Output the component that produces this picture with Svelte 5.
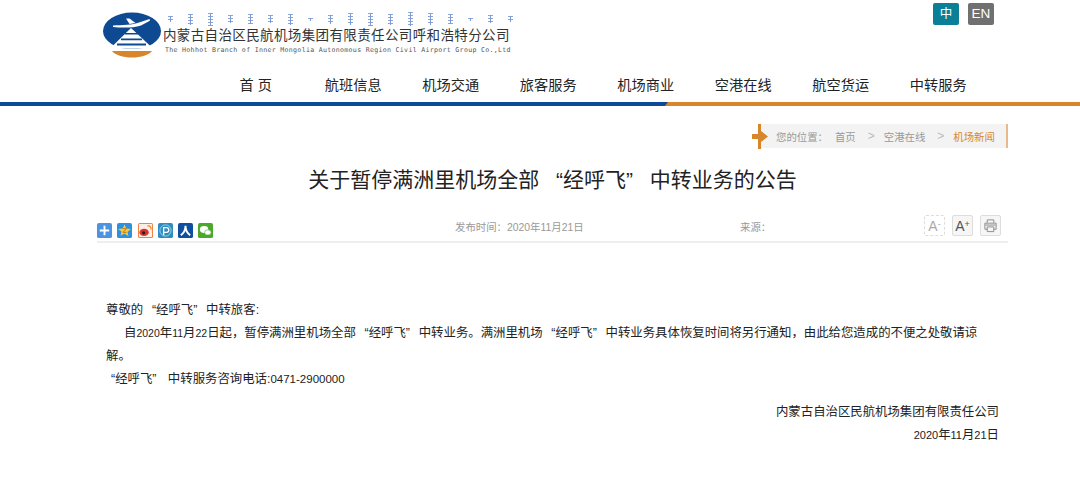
<script>
  const nav = ["首 页", "航班信息", "机场交通", "旅客服务", "机场商业", "空港在线", "航空货运", "中转服务"];
  const mongol = [6, 11, 13, 8, 10, 8, 11, 3, 9, 12, 13, 11, 14, 12, 10, 3, 8, 6];
</script>

<div class="page">
  <header class="top">
    <div class="brand">
      <svg class="logo" width="58" height="46" viewBox="0 0 58 46">
        <defs>
          <clipPath id="oval"><rect x="0" y="0" width="58" height="36.500" /></clipPath>
        </defs>
        <ellipse cx="29" cy="19" rx="29" ry="18.500" fill="#0d4a91" clip-path="url(#oval)" />
        <path d="M28 16 7 36.500h43z" fill="#fff" />
        <path d="M10 13.500c9-.5 20-.5 26-3l9-3c2.500-.5 3 .5 1 1.800l-8 4.200c-8 2.500-19 2.500-28 1.500z" fill="#fff" />
        <path d="M23 6.500h3.500l6 4.500-6 1z" fill="#fff" />
        <path d="M22 21h13v1.600H22zM18 26.500h21v1.800H18zM14 31.500h29v2H14z" fill="#0d4a91" />
        <path d="M9 39h40c-3 4-11 6.500-20 6.500S12 43 9 39z" fill="#d8862b" />
      </svg>
      <div class="brand-text">
        <div class="mongol">
          {#each mongol as h}
            <i style="height: {h}px"></i>
          {/each}
        </div>
        <div class="brand-cn">内蒙古自治区民航机场集团有限责任公司呼和浩特分公司</div>
        <div class="brand-en">The Hohhot Branch of Inner Mongolia Autonomous Region Civil Airport Group Co.,Ltd</div>
      </div>
      <div class="lang">
        <span class="zh">中</span>
        <span class="en">EN</span>
      </div>
    </div>
    <nav class="nav">
      {#each nav as item}
        <span>{item}</span>
      {/each}
    </nav>
  </header>
  <div class="stripe"><div class="stripe-blue"></div></div>

  <main class="wrap">
    <div class="crumb-row">
      <div class="crumb">
        <svg class="arrow" width="16" height="25" viewBox="0 0 16 25">
          <path d="M0 10h6V0h3v7l7 5.500-7 5.500v7H6V15H0z" fill="#d8862b" />
        </svg>
        <span class="here">您的位置：</span>
        <span>首页</span>
        <b>&gt;</b>
        <span>空港在线</span>
        <b>&gt;</b>
        <span class="current">机场新闻</span>
      </div>
    </div>

    <h1>关于暂停满洲里机场全部 “经呼飞” 中转业务的公告</h1>

    <div class="meta">
      <div class="share">
        <svg width="15" height="15" viewBox="0 0 16 16"><rect width="16" height="16" rx="2" fill="#4c94e2" /><path d="M7 3h2v4h4v2H9v4H7V9H3V7h4z" fill="#fff" /></svg>
        <svg width="15" height="15" viewBox="0 0 16 16"><rect width="16" height="16" rx="2" fill="#2f8fe0" /><path d="m8 1.500 2 4.300 4.700.5-3.500 3.200 1 4.600L8 11.300 3.800 13.600l1-4.600L1.300 6.300 6 5.800z" fill="#f7c93c" /><path d="M6 6h4L6.500 10H10" fill="none" stroke="#b8791a" /></svg>
        <svg width="15" height="15" viewBox="0 0 16 16"><rect width="16" height="16" rx="2" fill="#ee7b3c" /><rect x="1" y="1" width="14" height="14" fill="#fbeee6" /><ellipse cx="6.500" cy="10" rx="5" ry="3.800" fill="#d9342b" /><circle cx="6" cy="10.500" r="1.700" fill="#222" /><path d="M10 3c2 0 4 1 4 4" fill="none" stroke="#ee9b3c" stroke-width="1.500" /></svg>
        <svg width="15" height="15" viewBox="0 0 16 16"><rect width="16" height="16" rx="2" fill="#2f8cc0" /><circle cx="8" cy="8" r="6" fill="none" stroke="#9ad4ee" /><path d="M6 13V5h3a2.500 2.500 0 0 1 0 5H6" fill="none" stroke="#fff" stroke-width="1.400" /></svg>
        <svg width="15" height="15" viewBox="0 0 16 16"><rect width="16" height="16" rx="2" fill="#0f4f9f" /><path d="M8 3C8 8 6 11 3 13M8 3c0 5 2 8 5 10" fill="none" stroke="#fff" stroke-width="2" /></svg>
        <svg width="15" height="15" viewBox="0 0 16 16"><rect width="16" height="16" rx="2" fill="#4aa82a" /><ellipse cx="6.500" cy="7" rx="4.500" ry="3.700" fill="#fff" /><ellipse cx="10.500" cy="10" rx="3.500" ry="2.800" fill="#fff" stroke="#4aa82a" stroke-width=".6" /></svg>
      </div>
      <div class="date">发布时间：2020年11月21日</div>
      <div class="source">来源：</div>
      <div class="tools">
        <span class="tool off">A<sup>-</sup></span>
        <span class="tool">A<sup>+</sup></span>
        <span class="tool">
          <svg width="15" height="15" viewBox="0 0 16 16" fill="none" stroke="#888"><path d="M4.500 5V2h7v3M4.500 12H2V5.500h12V12h-2.500" /><path d="M4.500 9.500h7v5h-7zM2.500 7.500h11" /></svg>
        </span>
      </div>
    </div>

    <article class="body">
      <p>尊敬的 “经呼飞” 中转旅客:</p>
      <p class="indent">自<em>2020</em>年<em>11</em>月<em>22</em>日起，暂停满洲里机场全部 “经呼飞” 中转业务。满洲里机场 “经呼飞” 中转业务具体恢复时间将另行通知，由此给您造成的不便之处敬请谅解。</p>
      <p class="phone">“经呼飞” 中转服务咨询电话:<em>0471-2900000</em></p>
      <p class="sign first">内蒙古自治区民航机场集团有限责任公司</p>
      <p class="sign"><em>2020</em>年<em>11</em>月<em>21</em>日</p>
    </article>
  </main>
</div>

<style>
  :global(body) {
    margin: 0;
    background: #fff;
  }

  .page {
    width: 1080px;
    height: 490px;
    overflow: hidden;
    font-family: "Liberation Sans", "Noto Sans CJK SC", sans-serif;
    color: #222;
  }

  .top {
    height: 102px;
  }

  .brand {
    display: flex;
    align-items: flex-start;
    padding: 12px 0 0 103px;
    height: 58px;
    box-sizing: border-box;
    position: relative;
  }

  .logo {
    flex-shrink: 0;
  }

  .brand-text {
    margin-left: 2px;
    width: 352px;
  }

  .mongol {
    display: flex;
    justify-content: space-between;
    align-items: center;
    height: 14px;
    padding: 0 2px 0 5px;
    margin-bottom: 1px;
    filter: blur(0.4px);
  }

  .mongol i {
    width: 5px;
    position: relative;
    background: repeating-linear-gradient(#8aa5dc 0 1px, transparent 1px 3px);
  }

  .mongol i::after {
    content: "";
    position: absolute;
    left: 2px;
    top: 0;
    bottom: 0;
    width: 1px;
    background: #7f9ad4;
  }

  .brand-cn {
    font-size: 13.500px;
    line-height: 17px;
    letter-spacing: 0.370px;
    color: #333;
    white-space: nowrap;
  }

  .brand-en {
    font-family: "DejaVu Sans Mono", monospace;
    font-size: 6.600px;
    line-height: 12px;
    letter-spacing: 0.300px;
    color: #555;
    white-space: nowrap;
    padding-left: 2px;
  }

  .lang {
    position: absolute;
    top: 3px;
    left: 933px;
    display: flex;
    gap: 9px;
  }

  .lang span {
    width: 26px;
    height: 22px;
    border-radius: 2px;
    color: #fff;
    font-size: 13.500px;
    line-height: 22px;
    text-align: center;
  }

  .lang .zh {
    background: #0b7f96;
    font-size: 12.500px;
  }

  .en {
    background: #707070;
  }

  .nav {
    display: flex;
    padding: 15px 0 0 207px;
  }

  .nav span {
    width: 97.500px;
    text-align: center;
    font-size: 14.200px;
    line-height: 24px;
    color: #222;
    white-space: pre;
  }

  .stripe {
    height: 4px;
    background: #d8862b;
  }

  .stripe-blue {
    width: 668px;
    height: 4px;
    background: #0a4a97;
    clip-path: polygon(0 0, 100% 0, 665px 100%, 0 100%);
  }

  .wrap {
    width: 911px;
    margin-left: 97px;
  }

  .crumb-row {
    display: flex;
    justify-content: flex-end;
    padding-top: 18px;
  }

  .crumb {
    display: flex;
    align-items: center;
    gap: 9px;
    height: 24px;
    width: 247px;
    box-sizing: border-box;
    background: #f3f3f3;
    border-right: 2px solid #e9b98a;
    font-size: 10.400px;
    color: #999;
    position: relative;
    padding-left: 15px;
    white-space: nowrap;
  }

  .here {
    margin-right: -2px;
  }

  .crumb b {
    font-weight: 400;
    font-size: 12px;
    color: #bbb;
    margin-left: 3px;
  }

  .arrow {
    position: absolute;
    left: -9px;
    top: 0;
  }

  .current {
    color: #d8862b;
  }

  h1 {
    margin: 16px 0 0;
    font-size: 21px;
    line-height: 32px;
    font-weight: 400;
    word-spacing: 11px;
    text-align: center;
    color: #222;
  }

  .meta {
    display: grid;
    grid-template-columns: 358px 285px 184px 1fr;
    align-items: end;
    height: 47px;
    box-sizing: border-box;
    padding-bottom: 3px;
    border-bottom: 2px solid #eee;
    font-size: 10.400px;
    line-height: 20px;
    color: #999;
  }

  .share {
    display: flex;
    gap: 5.300px;
  }

  .share svg {
    display: block;
  }

  .tools {
    display: flex;
    gap: 7px;
    justify-content: flex-end;
    padding: 0 7px 2px 0;
  }

  .tool {
    display: flex;
    align-items: center;
    justify-content: center;
    width: 21px;
    height: 21px;
    box-sizing: border-box;
    border: 1px solid #ddd;
    background: #f6f6f6;
    border-radius: 2px;
    font-size: 14px;
    color: #555;
  }

  .tool sup {
    font-size: 9px;
    line-height: 0;
    margin-top: -4px;
  }

  .tool.off {
    border: 1px dashed #ddd;
    background: #fff;
    color: #aaa;
  }

  .body {
    padding: 56px 9px 0;
    font-size: 12.400px;
    line-height: 23px;
    word-spacing: 5.300px;
    color: #222;
  }

  .body p {
    margin: 0;
  }

  em {
    font-style: normal;
    font-size: 10.500px;
  }

  .indent {
    text-indent: 18px;
    padding-right: 12px;
  }

  .phone {
    padding-left: 5px;
    word-spacing: 8px;
  }

  .phone em {
    font-size: 11.500px;
  }

  .sign em {
    font-size: 11px;
  }

  .sign {
    text-align: right;
  }

  .sign.first {
    margin-top: 10px;
  }
</style>
